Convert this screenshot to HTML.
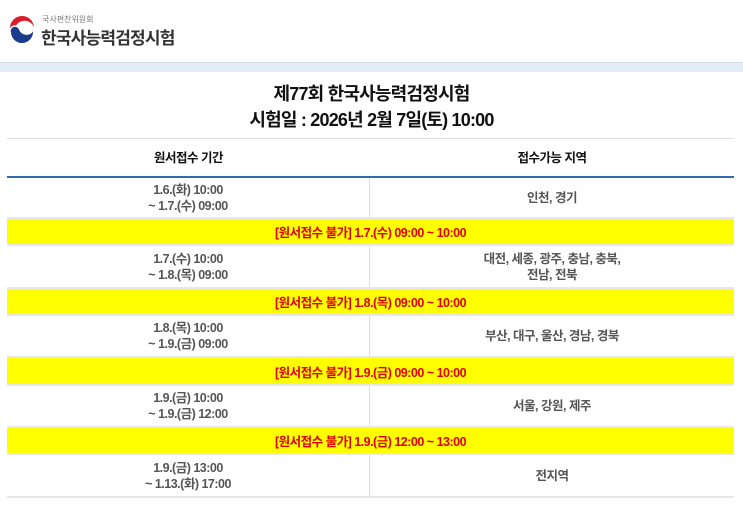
<!DOCTYPE html>
<html><head><meta charset="utf-8"><style>
*{margin:0;padding:0;box-sizing:border-box}
body{width:743px;height:511px;background:#fff;font-family:"Liberation Sans","Noto Sans CJK KR",sans-serif;position:relative;overflow:hidden}
.band{position:absolute;left:0;top:62px;width:743px;height:10px;background:#e4eef8;border-top:1px solid #d4dfea}
.title{position:absolute;left:0;width:743px;text-align:center;font-size:18px;font-weight:bold;color:#111;letter-spacing:-0.8px}
.r{position:absolute;left:7px;width:727px;display:flex}
.c{display:flex;align-items:center;justify-content:center;text-align:center;font-size:12.5px;font-weight:bold;color:#555;line-height:16px;letter-spacing:-0.5px}
.c1{width:363px;border-right:1px solid #ddd}
.c2{flex:1}
.d{border-bottom:2px solid #e8e8e8}
.y{background:#ffff00;color:#e00000;justify-content:center;align-items:center;font-size:12.5px;font-weight:bold;letter-spacing:-0.5px;border-bottom:2px solid #e8e8e8}
</style></head><body>
<svg style="position:absolute;left:8px;top:14px" width="28" height="29" viewBox="0 0 28 28">
<circle cx="14" cy="14" r="13" fill="#fff"/>
<path d="M3 18 A11 11 0 0 0 25 17 A8 8 0 0 1 11 15 A4 4 0 0 0 3 18Z" fill="#1b3c8c"/>
<path d="M2 14 A12 12 0 0 1 26 13 A10 10 0 0 0 8 11 A5 5 0 0 0 2 14Z" fill="#d81e2a"/>
</svg>
<div style="position:absolute;left:42px;top:14px;font-size:8px;color:#777">국사편찬위원회</div>
<div style="position:absolute;left:41px;top:24px;font-size:17px;font-weight:bold;color:#333;letter-spacing:-0.8px">한국사능력검정시험</div>
<div class="band"></div>
<div class="title" style="top:80px">제77회 한국사능력검정시험</div>
<div class="title" style="top:106px">시험일 : 2026년 2월 7일(토) 10:00</div>
<div class="r" style="top:138px;height:40px;border-top:1px solid #e0e0e0;border-bottom:2px solid #2f6db0">
<div class="c" style="width:363px;color:#111">원서접수 기간</div><div class="c c2" style="color:#111">접수가능 지역</div></div>
<div class="r d" style="top:178px;height:41px"><div class="c c1">1.6.(화) 10:00<br>~ 1.7.(수) 09:00</div><div class="c c2">인천, 경기</div></div>
<div class="r y" style="top:219px;height:27px">[원서접수 불가] 1.7.(수) 09:00 ~ 10:00</div>
<div class="r d" style="top:246px;height:43px"><div class="c c1">1.7.(수) 10:00<br>~ 1.8.(목) 09:00</div><div class="c c2">대전, 세종, 광주, 충남, 충북,<br>전남, 전북</div></div>
<div class="r y" style="top:289px;height:27px">[원서접수 불가] 1.8.(목) 09:00 ~ 10:00</div>
<div class="r d" style="top:316px;height:42px"><div class="c c1">1.8.(목) 10:00<br>~ 1.9.(금) 09:00</div><div class="c c2">부산, 대구, 울산, 경남, 경북</div></div>
<div class="r y" style="top:358px;height:28px">[원서접수 불가] 1.9.(금) 09:00 ~ 10:00</div>
<div class="r d" style="top:386px;height:42px"><div class="c c1">1.9.(금) 10:00<br>~ 1.9.(금) 12:00</div><div class="c c2">서울, 강원, 제주</div></div>
<div class="r y" style="top:428px;height:27px">[원서접수 불가] 1.9.(금) 12:00 ~ 13:00</div>
<div class="r d" style="top:455px;height:43px"><div class="c c1">1.9.(금) 13:00<br>~ 1.13.(화) 17:00</div><div class="c c2">전지역</div></div>
</body></html>
